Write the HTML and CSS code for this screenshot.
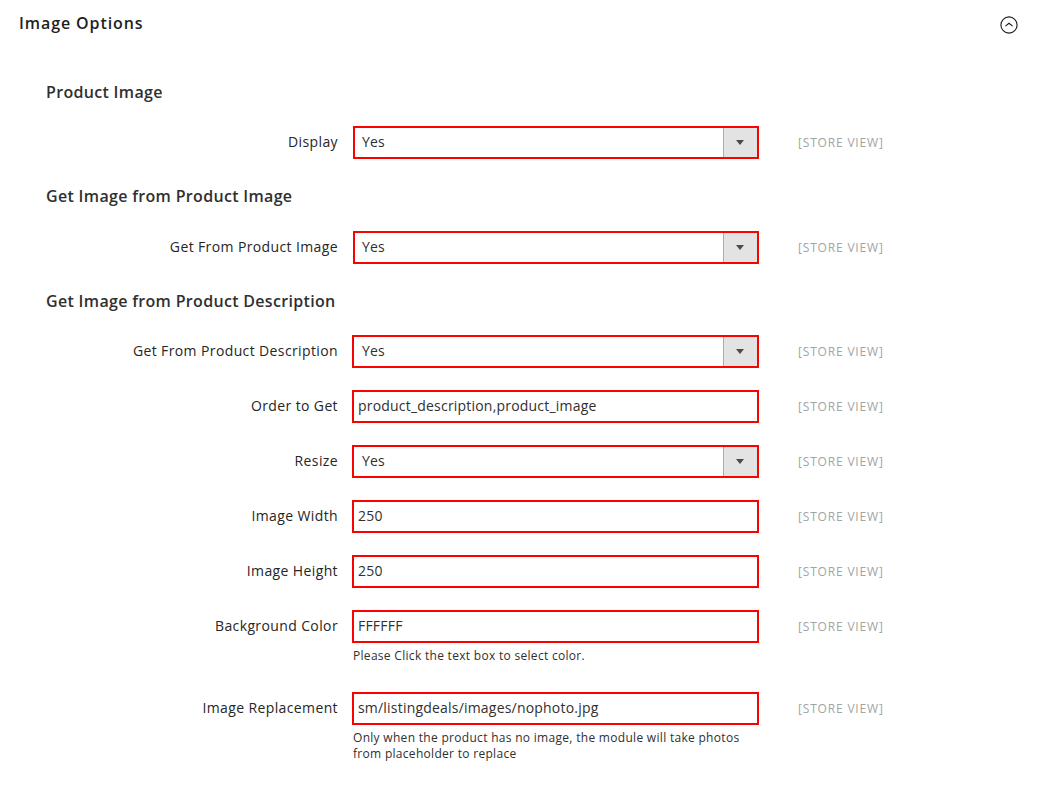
FILE: index.html
```html
<!DOCTYPE html>
<html lang="en">
<head>
<meta charset="utf-8">
<title>Image Options</title>
<link rel="stylesheet" href="styles.css">
</head>
<body>
<main class="page">
  <header class="section-head">
    <h2 class="section-title">Image Options</h2>
    <svg class="toggle" width="18" height="18" viewBox="0 0 18 18" fill="none" aria-hidden="true">
      <circle cx="9" cy="9" r="8.1" stroke="#1a1a1a" stroke-width="1.1"/>
      <path d="M5.4 10.1 9 7.2l3.6 2.9" stroke="#1a1a1a" stroke-width="1.1"/>
    </svg>
  </header>

  <h3 class="group first">Product Image</h3>
  <div class="row">
    <label class="label">Display</label>
    <div class="control select inset"><span class="value">Yes</span><span class="arrow"></span></div>
    <span class="scope">[STORE VIEW]</span>
  </div>

  <h3 class="group second">Get Image from Product Image</h3>
  <div class="row">
    <label class="label">Get From Product Image</label>
    <div class="control select inset"><span class="value">Yes</span><span class="arrow"></span></div>
    <span class="scope">[STORE VIEW]</span>
  </div>

  <h3 class="group">Get Image from Product Description</h3>
  <div class="row">
    <label class="label">Get From Product Description</label>
    <div class="control select"><span class="value">Yes</span><span class="arrow"></span></div>
    <span class="scope">[STORE VIEW]</span>
  </div>
  <div class="row">
    <label class="label">Order to Get</label>
    <div class="control text">product_description,product_image</div>
    <span class="scope">[STORE VIEW]</span>
  </div>
  <div class="row">
    <label class="label">Resize</label>
    <div class="control select"><span class="value">Yes</span><span class="arrow"></span></div>
    <span class="scope">[STORE VIEW]</span>
  </div>
  <div class="row">
    <label class="label">Image Width</label>
    <div class="control text">250</div>
    <span class="scope">[STORE VIEW]</span>
  </div>
  <div class="row">
    <label class="label">Image Height</label>
    <div class="control text">250</div>
    <span class="scope">[STORE VIEW]</span>
  </div>
  <div class="row">
    <label class="label">Background Color</label>
    <div class="control text">FFFFFF</div>
    <span class="scope">[STORE VIEW]</span>
    <p class="note note-one">Please Click the text box to select color.</p>
  </div>
  <div class="row">
    <label class="label">Image Replacement</label>
    <div class="control text">sm/listingdeals/images/nophoto.jpg</div>
    <span class="scope">[STORE VIEW]</span>
    <p class="note">Only when the product has no image, the module will take photos from placeholder to replace</p>
  </div>
</main>
</body>
</html>
```

FILE: styles.css
```css
* { box-sizing: border-box; }

html, body { margin: 0; background: #fff; }

body {
  font-family: "Open Sans", "Noto Sans", sans-serif;
  color: #303030;
  font-size: 14px;
}

.page {
  width: 1040px;
  height: 788px;
  overflow: hidden;
  padding: 12px 22.5px 0 19px;
}

.section-head {
  display: flex;
  justify-content: space-between;
  align-items: center;
  height: 24px;
}

.section-title {
  margin: -2px 0 0;
  font-size: 16px;
  line-height: 22px;
  font-weight: 600;
  color: #1f1f1f;
  letter-spacing: 0.9px;
}

.toggle { display: block; margin-top: 1px; }

.group {
  margin: 26px 0 23px 27px;
  height: 22px;
  font-size: 16px;
  line-height: 22px;
  font-weight: 600;
  color: #303030;
  letter-spacing: 0.32px;
}

.group.first { margin-top: 45px; margin-bottom: 23px; }
.group.second { margin-bottom: 24px; }

.row {
  display: grid;
  grid-template-columns: 319px 407px auto;
  column-gap: 14px;
  margin-bottom: 22px;
  align-items: center;
}

.row > .scope { margin-left: 25px; }

.label {
  text-align: right;
  font-size: 14px;
  line-height: 20px;
  font-weight: 500;
  color: #262626;
  letter-spacing: 0.38px;
  padding-bottom: 2px;
}

.control {
  height: 33px;
  border: 2px solid #f00;
  background: #fff;
  font-size: 14px;
  line-height: 27px;
  color: #303030;
  white-space: nowrap;
  letter-spacing: 0.2px;
}

.text { padding-left: 4px; }

.select {
  display: flex;
  justify-content: space-between;
}

.value { padding-left: 8px; }

.inset { margin-left: 1px; }
.inset .value { padding-left: 7px; }

.arrow {
  width: 34px;
  background: #e3e3e3;
  border-left: 1px solid #adadad;
  position: relative;
}

.arrow::after {
  content: "";
  position: absolute;
  left: 12px;
  top: 12px;
  border-style: solid;
  border-width: 5px 4.5px 0;
  border-color: #514943 transparent transparent;
}

.scope {
  font-size: 12px;
  line-height: 16px;
  color: #a0a5a5;
  letter-spacing: 0.82px;
  white-space: nowrap;
}

.note {
  grid-column: 2;
  margin: 5px 0 0;
  padding-left: 1px;
  font-size: 12px;
  line-height: 16px;
  color: #303030;
  letter-spacing: 0.3px;
}

.note-one { margin-bottom: 6px; }
```
